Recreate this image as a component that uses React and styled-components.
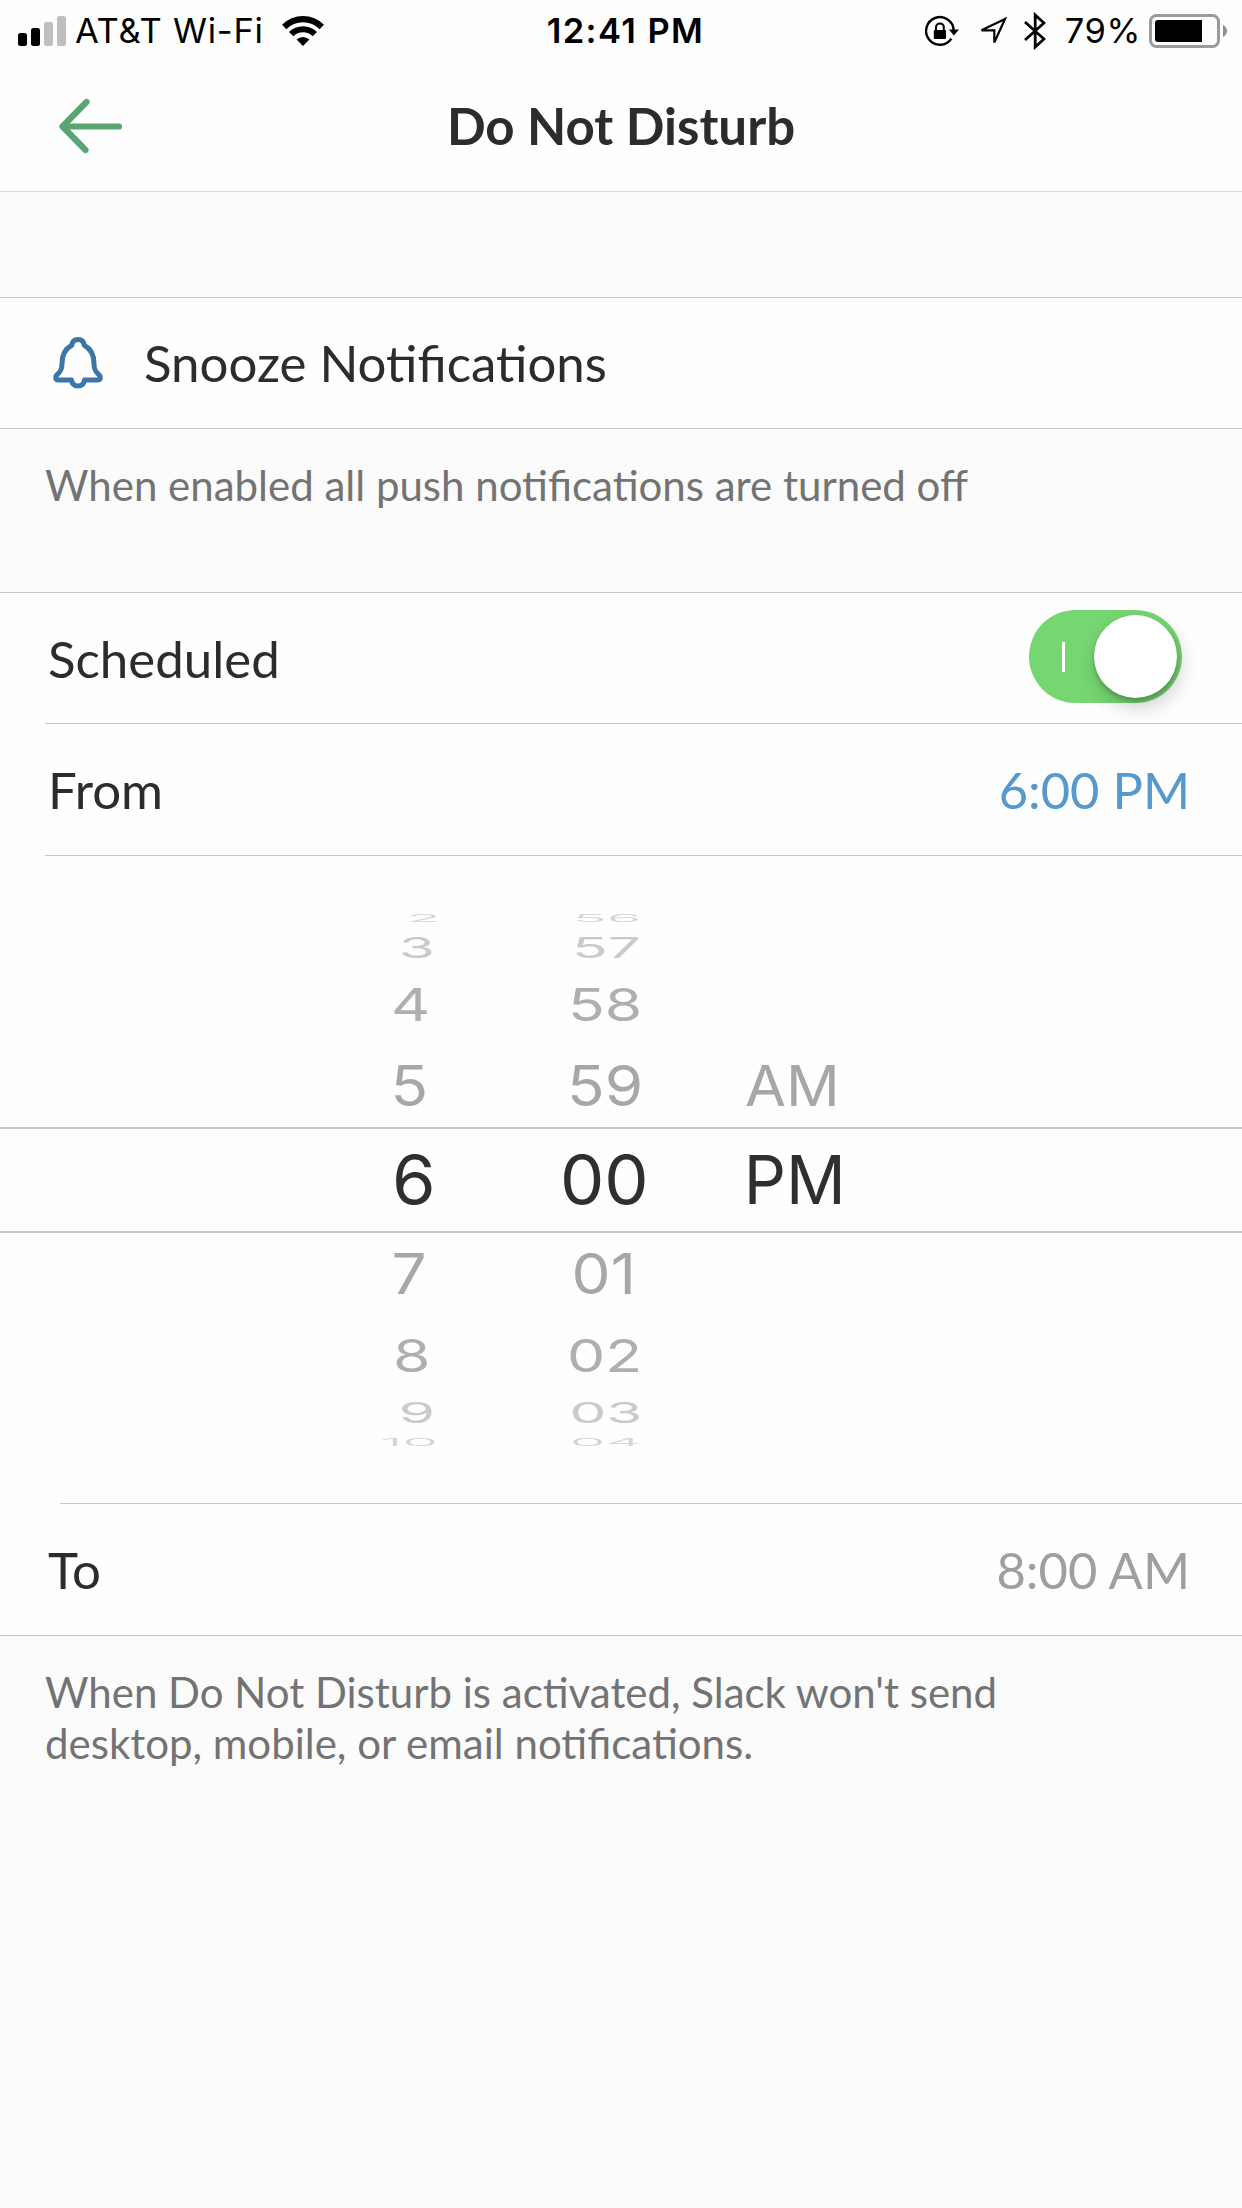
import styled, { createGlobalStyle } from "styled-components";
import { useState } from "react";

const hours = [
  { text: "2", level: 4, shift: 11 },
  { text: "3", level: 3, shift: 4 },
  { text: "4", level: 2, shift: -2 },
  { text: "5", level: 1, shift: -4 },
  { text: "6", level: 0, shift: 1 },
  { text: "7", level: 1, shift: -4 },
  { text: "8", level: 2, shift: -1 },
  { text: "9", level: 3, shift: 4 },
  { text: "10", level: 4, shift: -4 },
];

const minutes = [
  { text: "56", level: 4, shift: 3 },
  { text: "57", level: 3, shift: 2 },
  { text: "58", level: 2, shift: 1 },
  { text: "59", level: 1, shift: 1 },
  { text: "00", level: 0, shift: 0 },
  { text: "01", level: 1, shift: 0 },
  { text: "02", level: 2, shift: 1 },
  { text: "03", level: 3, shift: 2 },
  { text: "04", level: 4, shift: 2 },
];

const periods = [
  { text: "AM", level: 1, shift: -3, stretch: 0.96 },
  { text: "PM", level: 0, shift: 0, stretch: 0.94 },
];

// how a wheel item looks, by its distance from the selected row
const levels = [
  { height: 106, sx: 1.05, sy: 1, color: "#2f2f2f" },
  { height: 82, sx: 0.925, sy: 0.84, color: "#a7a7a7" },
  { height: 81, sx: 0.905, sy: 0.67, color: "#afafaf" },
  { height: 33, sx: 0.87, sy: 0.425, color: "#cacaca" },
  { height: 26, sx: 0.86, sy: 0.16, color: "#d4d4d4", weight: 300 },
];

const Wheel = ({ items }) => (
  <Column>
    {items.map((item) => (
      <Item key={item.text} $level={levels[item.level]}>
        <Glyphs $level={levels[item.level]} $shift={item.shift} $stretch={item.stretch || 1}>
          {item.text}
        </Glyphs>
      </Item>
    ))}
  </Column>
);

const StatusIcons = () => (
  <svg width="101" height="40" viewBox="924 10 101 40" fill="none" stroke="#000">
    <path d="M952.4 37.6A13.8 13.8 0 1 1 954.7 29.5" strokeWidth="2.4" />
    <path d="M949.8 28.6H960L954.9 34.6Z" fill="#000" stroke="none" />
    <rect x="934.8" y="29" width="12.2" height="9" rx="1" fill="#000" stroke="none" />
    <path d="M937 29.5V26.3a3.9 3.9 0 0 1 7.8 0V29.5" strokeWidth="2" />
    <path d="M1006 18L982.5 29.3H995.3V41.5Z" strokeWidth="2.2" />
  </svg>
);

const App = () => {
  const [scheduled, setscheduled] = useState(true);

  return (
    <Screen>
      <GlobalStyle />
      <StatusBar>
        <Carrier>
          <svg width="49" height="30" viewBox="0 0 49 30">
            <rect x="0" y="17" width="9" height="13" rx="2.5" />
            <rect x="13" y="12" width="9" height="18" rx="2.5" />
            <rect x="26" y="6" width="9" height="24" rx="2.5" fill="#bfbfbf" />
            <rect x="39" y="0" width="9" height="30" rx="2.5" fill="#bfbfbf" />
          </svg>
          <CarrierName>AT&amp;T Wi-Fi</CarrierName>
          <svg width="42" height="30" viewBox="0 0 42 30">
            <path d="M0 8.8A29.5 29.5 0 0 1 42 8.8L37.6 13.2A23.5 23.5 0 0 0 4.4 13.2Z" />
            <path d="M7 16A19.7 19.7 0 0 1 35 16L30.7 20.3A13.7 13.7 0 0 0 11.3 20.3Z" />
            <path d="M14.6 23.6A9.2 9.2 0 0 1 27.4 23.6L21 30Z" />
          </svg>
        </Carrier>
        <Clock>12:41 PM</Clock>
        <Indicators>
          <StatusIcons />
          <svg width="22" height="38" viewBox="0 0 22 38" fill="none" stroke="#000">
            <path d="M1 10L20 27L11.2 35V3L20 11L1 28" strokeWidth="2.8" />
          </svg>
          <Percent>79%</Percent>
          <svg width="79" height="34" viewBox="0 0 79 34">
            <rect x="1.5" y="1.5" width="68" height="31" rx="6" fill="none" stroke="#9b9b9b" strokeWidth="3" />
            <path d="M9 6H53V28H9A3 3 0 0 1 6 25V9A3 3 0 0 1 9 6Z" />
            <path d="M74 11Q78 13.500 78 17T74 23Z" fill="#8f8f8f" />
          </svg>
        </Indicators>
      </StatusBar>

      <Header>
        <Back aria-label="Back">
          <svg width="70" height="60" viewBox="56 96 70 60" fill="none" stroke="#5ba573" strokeWidth="6.2" strokeLinecap="round" strokeLinejoin="round">
            <path d="M120 126.500H63.500M87.500 102L63.500 126.500L86.500 150" />
          </svg>
        </Back>
        <Title>Do Not Disturb</Title>
      </Header>

      <Spacer />

      <Row $snooze>
        <svg width="52" height="54" viewBox="0 0 52 54" fill="none" stroke="#3a76a8" strokeWidth="5" strokeLinejoin="round">
          <path d="M26 4.500C22 4.500 20.200 6.800 19.800 10.300C12 14.500 10 21.500 10 28.500C10 34.500 8.500 37 4.800 40C2.600 42.500 3.600 45 6.500 45H19.500C20 49 22.500 51 26 51S32 49 32.500 45H45.500C48.400 45 49.400 42.500 47.200 40C43.500 37 42 34.500 42 28.500C42 21.500 40 14.500 32.200 10.300C31.800 6.800 30 4.500 26 4.500Z" />
        </svg>
        <Label>Snooze Notifications</Label>
      </Row>
      <Line />
      <Note $height={163}>When enabled all push notifications are turned off</Note>
      <Line />

      <Row>
        <Label>Scheduled</Label>
        <Switch $on={scheduled} onClick={() => setscheduled(!scheduled)}>
          <Mark />
          <Knob />
        </Switch>
      </Row>
      <Line $inset={45} />
      <Row $height={131}>
        <Label>From</Label>
        <Time $active>6:00 PM</Time>
      </Row>
      <Line $inset={45} />

      <Picker>
        <Band />
        <Wheel items={hours} />
        <Wheel items={minutes} />
        <Wheel items={periods} />
      </Picker>

      <Line $inset={60} />
      <Row $height={131}>
        <Label>To</Label>
        <Time>8:00 AM</Time>
      </Row>
      <Line />
      <Note>
        When Do Not Disturb is activated, Slack won't send
        <br />
        desktop, mobile, or email notifications.
      </Note>
    </Screen>
  );
};

//Styled-Components

const GlobalStyle = createGlobalStyle`
  * {
    box-sizing: border-box;
  }

  body {
    margin: 0;
    background: #fbfbfb;
  }

  svg {
    display: block;
    flex: none;
  }
`;

const Screen = styled.div`
  width: 1242px;
  height: 2208px;
  overflow: hidden;
  background: #fbfbfb;
  color: #2c2c2c;
  font-family: Lato, sans-serif;
`;

const StatusBar = styled.div`
  display: grid;
  grid-template-columns: 1fr auto 1fr;
  align-items: center;
  height: 60px;
  background: #fefefe;
  color: #000;
  font-family: Inter, sans-serif;
  font-size: 34.5px;
  line-height: 60px;
  white-space: nowrap;
`;

const Carrier = styled.div`
  display: flex;
  align-items: center;
  padding-left: 18px;
`;

const CarrierName = styled.span`
  margin: 1px 18px 0 8px;
  letter-spacing: 0.75px;
`;

const Clock = styled.span`
  margin: 1px 0 0 9px;
  font-weight: 600;
  letter-spacing: 1.4px;
`;

const Indicators = styled.div`
  display: flex;
  align-items: center;
  justify-content: flex-end;
  padding-right: 14px;
`;

const Percent = styled.span`
  margin: 1px 8px 0 19px;
  letter-spacing: 0.6px;
`;

const Header = styled.div`
  display: grid;
  grid-template-columns: 1fr auto 1fr;
  align-items: center;
  height: 132px;
  border-bottom: 1px solid #d9d9d9;
  background: #fefefe;
`;

const Back = styled.button`
  justify-self: start;
  margin-left: 55px;
  padding: 0;
  border: 0;
  background: none;
`;

const Title = styled.h1`
  margin: 0;
  font-size: 51px;
  font-weight: 700;
  line-height: 62px;
`;

const Spacer = styled.div`
  height: 106px;
  border-bottom: 1px solid #c8c8c8;
`;

const Row = styled.div`
  display: flex;
  align-items: center;
  justify-content: ${(props) => (props.$snooze ? "flex-start" : "space-between")};
  gap: 40px;
  height: ${(props) => props.$height || 130}px;
  padding: 0 ${(props) => (props.$snooze ? "52px 2px" : "48px")};
  background: #fefefe;
`;

const Label = styled.span`
  font-size: 51px;
  line-height: 61px;
  white-space: nowrap;
`;

const Time = styled(Label)`
  margin-right: 4px;
  color: ${(props) => (props.$active ? "#5699cd" : "#9f9f9f")};
  font-size: 50.7px;
`;

const Line = styled.div`
  height: 1px;
  background: ${(props) =>
    props.$inset
      ? `linear-gradient(to right, #fefefe ${props.$inset}px, #c8c8c8 ${props.$inset}px)`
      : "#c8c8c8"};
`;

const Note = styled.p`
  height: ${(props) => (props.$height ? `${props.$height}px` : "auto")};
  margin: 0;
  padding: 31px 45px 0;
  color: #737373;
  font-size: 42px;
  line-height: 50.5px;
`;

const Switch = styled.button`
  display: flex;
  align-items: center;
  justify-content: space-between;
  flex-direction: ${(props) => (props.$on ? "row" : "row-reverse")};
  width: 153px;
  height: 93px;
  margin: 0 12px 3px 0;
  padding: 0 5px 0 33px;
  border: 0;
  border-radius: 47px;
  background: ${(props) => (props.$on ? "#76d672" : "#e5e5e5")};
`;

const Mark = styled.span`
  width: 3px;
  height: 30px;
  background: #fefefe;
`;

const Knob = styled.span`
  width: 83px;
  height: 83px;
  border-radius: 50%;
  background: #fff;
  box-shadow: 3px 9px 20px rgba(0, 0, 0, 0.2), 0 3px 4px rgba(0, 0, 0, 0.2);
`;

const Picker = styled.div`
  position: relative;
  display: grid;
  grid-template-columns: 191px 191px 191px;
  justify-content: center;
  align-items: start;
  height: 647px;
  padding: 49px 34px 0 0;
  background: #fefefe;
`;

// selected row lines, drawn over the wheels
const Band = styled.div`
  position: absolute;
  top: 271px;
  left: 0;
  right: 0;
  height: 106px;
  border-top: 2px solid #cacaca;
  border-bottom: 2px solid #cacaca;
`;

const Column = styled.div`
  display: flex;
  flex-direction: column;
  align-items: center;

  &:last-child {
    padding-top: 140px;
  }
`;

const Item = styled.div`
  display: flex;
  align-items: center;
  justify-content: center;
  height: ${(props) => props.$level.height}px;
  color: ${(props) => props.$level.color};
`;

const Glyphs = styled.span`
  font-family: Inter, sans-serif;
  font-size: 67px;
  font-weight: ${(props) => props.$level.weight || 400};
  line-height: 80px;
  transform: translateX(${(props) => props.$shift}px)
    scale(${(props) => props.$level.sx * props.$stretch}, ${(props) => props.$level.sy});
`;

export default App;
